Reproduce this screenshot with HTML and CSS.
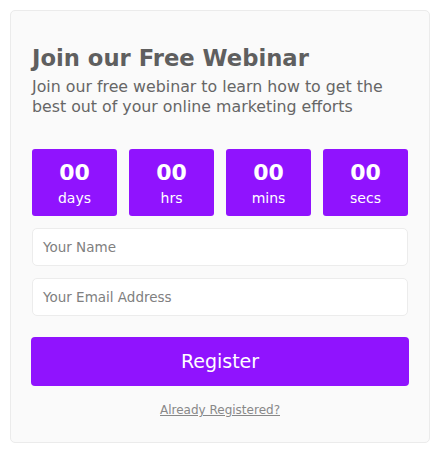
FILE: index.html
```html
<!DOCTYPE html>
<html>
<head>
<meta charset="utf-8">
<link rel="stylesheet" href="styles.css">
</head>
<body>
<div class="card">
  <h1 class="title">Join our Free Webinar</h1>
  <p class="subtitle">Join our free webinar to learn how to get the best out of your online marketing efforts</p>
  <div class="countdown">
    <div class="unit"><span class="num">00</span><span class="label">days</span></div>
    <div class="unit"><span class="num">00</span><span class="label">hrs</span></div>
    <div class="unit"><span class="num">00</span><span class="label">mins</span></div>
    <div class="unit"><span class="num">00</span><span class="label">secs</span></div>
  </div>
  <div class="field">Your Name</div>
  <div class="field">Your Email Address</div>
  <div class="button">Register</div>
  <div class="linkrow"><a class="link">Already Registered?</a></div>
</div>
</body>
</html>
```
FILE: styles.css
```css
html, body { margin: 0; padding: 0; background: #fff; }
body { padding: 10px; font-family: "DejaVu Sans", Verdana, sans-serif; color: #626262; }
.card {
  width: 420px;
  height: 433px;
  box-sizing: border-box;
  border: 1px solid #ebebeb;
  border-radius: 5px;
  background: #fafafa;
  padding: 32px 21px 0 21px;
}
.title { margin: 0; font-size: 22.7px; font-weight: bold; line-height: 30px; color: #5f5f5f; }
.subtitle { margin: 4px 0 0 0; font-size: 15.8px; line-height: 20px; color: #666; }
.countdown { display: flex; gap: 12px; margin: 32px 0 0 0; }
.unit {
  width: 85px; height: 67px; background: #9013fe; border-radius: 3px;
  display: flex; flex-direction: column; align-items: center; color: #fff;
}
.num { font-size: 22px; font-weight: bold; line-height: 24px; margin-top: 12px; }
.label { font-size: 14px; line-height: 18px; margin-top: 4px; }
.field {
  margin: 12px 0 0 0; width: 376px; height: 38px; box-sizing: border-box;
  background: #fff; border: 1px solid #ececec; border-radius: 5px;
  padding: 0 10px; font-size: 13.5px; line-height: 36px; color: #808080;
}
.button {
  margin-top: 21px; width: 378px; height: 49px; background: #9013fe; border-radius: 4px;
  color: #fff; font-size: 19px; text-align: center; line-height: 49px; margin-left: -1px;
}
.linkrow { text-align: center; margin-top: 13px; }
.link { font-size: 12px; color: #888; text-decoration: underline; }
```
